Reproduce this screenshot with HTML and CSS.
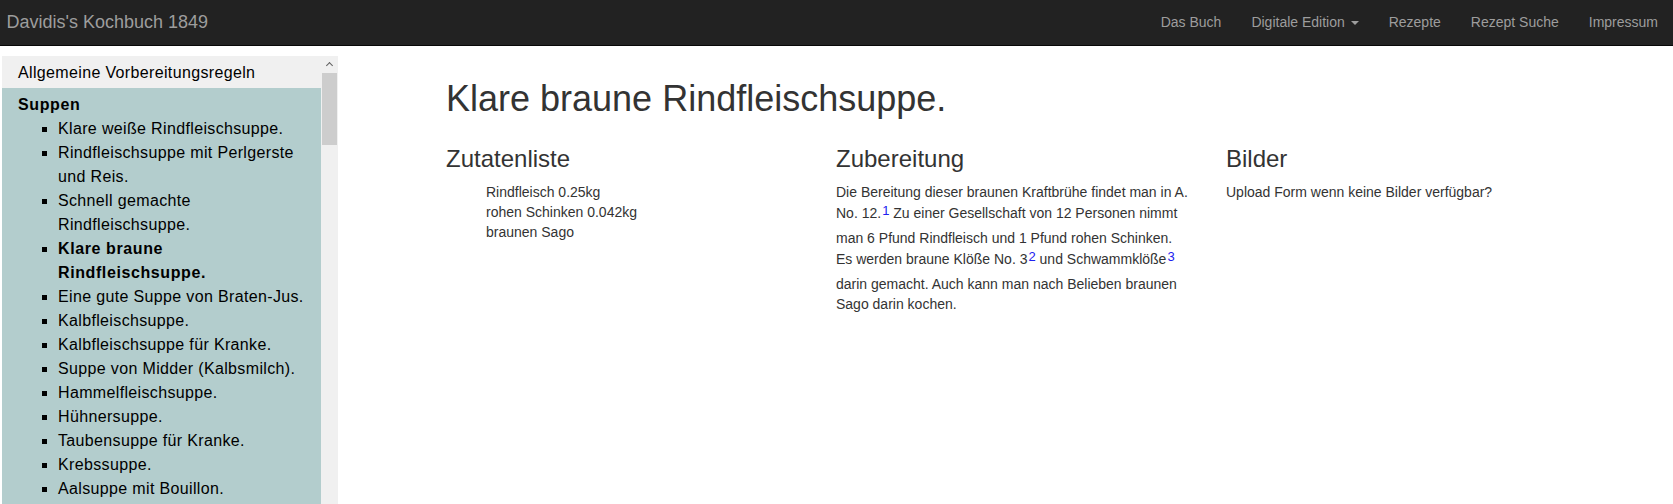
FILE: index.html
```html
<!DOCTYPE html>
<html lang="de">
<head>
<meta charset="utf-8">
<title>Klare braune Rindfleischsuppe.</title>
<link rel="stylesheet" href="styles.css">
</head>
<body>
<nav class="navbar">
  <a class="brand" href="#">Davidis's Kochbuch 1849</a>
  <ul class="nav">
    <li><a href="#">Das Buch</a></li>
    <li><a href="#">Digitale Edition <span class="caret"></span></a></li>
    <li><a href="#">Rezepte</a></li>
    <li><a href="#">Rezept Suche</a></li>
    <li><a href="#">Impressum</a></li>
  </ul>
</nav>
<div class="page">
  <aside class="sidebar">
    <div class="sidebar-list">
      <div class="chapter">Allgemeine Vorbereitungsregeln</div>
      <div class="chapter chapter-active">
        <div class="chapter-title">Suppen</div>
        <ul class="recipes">
          <li>Klare weiße Rindfleischsuppe.</li>
          <li>Rindfleischsuppe mit Perlgerste und Reis.</li>
          <li>Schnell gemachte Rindfleischsuppe.</li>
          <li class="current">Klare braune Rindfleischsuppe.</li>
          <li>Eine gute Suppe von Braten-Jus.</li>
          <li>Kalbfleischsuppe.</li>
          <li>Kalbfleischsuppe für Kranke.</li>
          <li>Suppe von Midder (Kalbsmilch).</li>
          <li>Hammelfleischsuppe.</li>
          <li>Hühnersuppe.</li>
          <li>Taubensuppe für Kranke.</li>
          <li>Krebssuppe.</li>
          <li>Aalsuppe mit Bouillon.</li>
        </ul>
      </div>
    </div>
    <div class="scrollbar" aria-hidden="true">
      <div class="scroll-arrow"><span class="chevron"></span></div>
      <div class="scroll-thumb"></div>
    </div>
  </aside>
  <main class="main">
    <div class="container">
      <h1 class="title">Klare braune Rindfleischsuppe.</h1>
      <div class="row">
        <section class="col">
          <h3 class="col-title">Zutatenliste</h3>
          <ul class="ingredients">
            <li>Rindfleisch 0.25kg</li>
            <li>rohen Schinken 0.042kg</li>
            <li>braunen Sago</li>
          </ul>
        </section>
        <section class="col">
          <h3 class="col-title">Zubereitung</h3>
          <p class="text">Die Bereitung dieser braunen Kraftbrühe findet man in A. No. 12.<sup class="note">1</sup> Zu einer Gesellschaft von 12 Personen nimmt man 6 Pfund Rindfleisch und 1 Pfund rohen Schinken. Es&nbsp;werden braune Klöße No. 3<sup class="note">2</sup> und Schwammklöße<sup class="note">3</sup> darin gemacht. Auch kann man nach Belieben braunen Sago darin kochen.</p>
        </section>
        <section class="col">
          <h3 class="col-title">Bilder</h3>
          <p class="text">Upload Form wenn keine Bilder verfügbar?</p>
        </section>
      </div>
    </div>
  </main>
</div>
</body>
</html>
```
FILE: styles.css
```css
* { box-sizing: border-box; }
html, body { margin: 0; padding: 0; height: 100%; }
body {
  font-family: "Liberation Sans", Arial, sans-serif;
  font-size: 14px;
  line-height: 20px;
  color: #333;
  background: #fff;
  overflow: hidden;
}

/* navbar */
.navbar {
  display: flex;
  justify-content: space-between;
  height: 46px;
  background: #222;
  border-bottom: 1px solid #080808;
}
.brand {
  padding: 12px 0 0 6.5px;
  font-size: 18px;
  line-height: 20px;
  color: #9d9d9d;
  text-decoration: none;
}
.nav {
  display: flex;
  margin: 0;
  padding: 0;
  list-style: none;
}
.nav a {
  display: block;
  padding: 12px 15px 13px;
  line-height: 20px;
  color: #9d9d9d;
  text-decoration: none;
}
.caret {
  display: inline-block;
  width: 0;
  height: 0;
  margin-left: 2px;
  vertical-align: middle;
  border-top: 4px solid;
  border-left: 4px solid transparent;
  border-right: 4px solid transparent;
}

/* layout */
.page {
  display: flex;
  align-items: flex-start;
}

/* sidebar */
.sidebar {
  flex: none;
  display: flex;
  width: 336px;
  height: 448px;
  margin: 10px 0 0 2px;
  overflow: hidden;
  background: #f0f0f0;
  color: #000;
  font-size: 16px;
  line-height: 24px;
  letter-spacing: 0.35px;
}
.sidebar-list {
  width: 319px;
  flex: none;
  display: flex;
  flex-direction: column;
  overflow: hidden;
}
.chapter {
  flex: none;
  padding: 5px 10px 2.5px 16px;
}
.chapter-active {
  flex: 1 0 auto;
  padding-bottom: 4px;
  background: #b3cdcd;
}
.chapter-title {
  font-weight: bold;
  letter-spacing: 0.6px;
}
.recipes {
  margin: 0;
  padding: 0 0 0 40px;
  list-style: square;
}
.recipes .current {
  font-weight: bold;
  letter-spacing: 0.6px;
}

/* fake scrollbar of the sidebar panel */
.scrollbar {
  flex: none;
  width: 17px;
  display: flex;
  flex-direction: column;
  background: #f0f0f0;
}
.scroll-arrow {
  height: 17px;
  display: flex;
  justify-content: center;
  padding-top: 7px;
}
.chevron {
  width: 5px;
  height: 5px;
  border-top: 1.5px solid #606060;
  border-left: 1.5px solid #606060;
  transform: rotate(45deg);
}
.scroll-thumb {
  height: 72px;
  margin: 0 1px 0 1px;
  background: #cdcdcd;
}

/* main */
.main {
  flex: 1;
  padding: 33px 0 0 93px;
}
.container {
  width: 1170px;
  padding: 0 15px;
}
.title {
  margin: 0 0 27px;
  font-size: 36px;
  font-weight: 500;
  line-height: 39.6px;
}
.row {
  display: grid;
  grid-template-columns: repeat(3, 1fr);
  margin: 0 -15px;
}
.col {
  padding: 0 15px;
}
.col-title {
  margin: 0 0 10px;
  font-size: 24px;
  font-weight: 500;
  line-height: 26.4px;
}
.ingredients {
  margin: 0;
  padding: 0 0 0 40px;
  list-style: none;
}
.text {
  margin: 0 0 10px;
}
.note {
  position: relative;
  top: -4px;
  margin-left: 1px;
  font-size: 13px;
  line-height: 26px;
  vertical-align: -1.2px;
  color: #2020f0;
}
```
